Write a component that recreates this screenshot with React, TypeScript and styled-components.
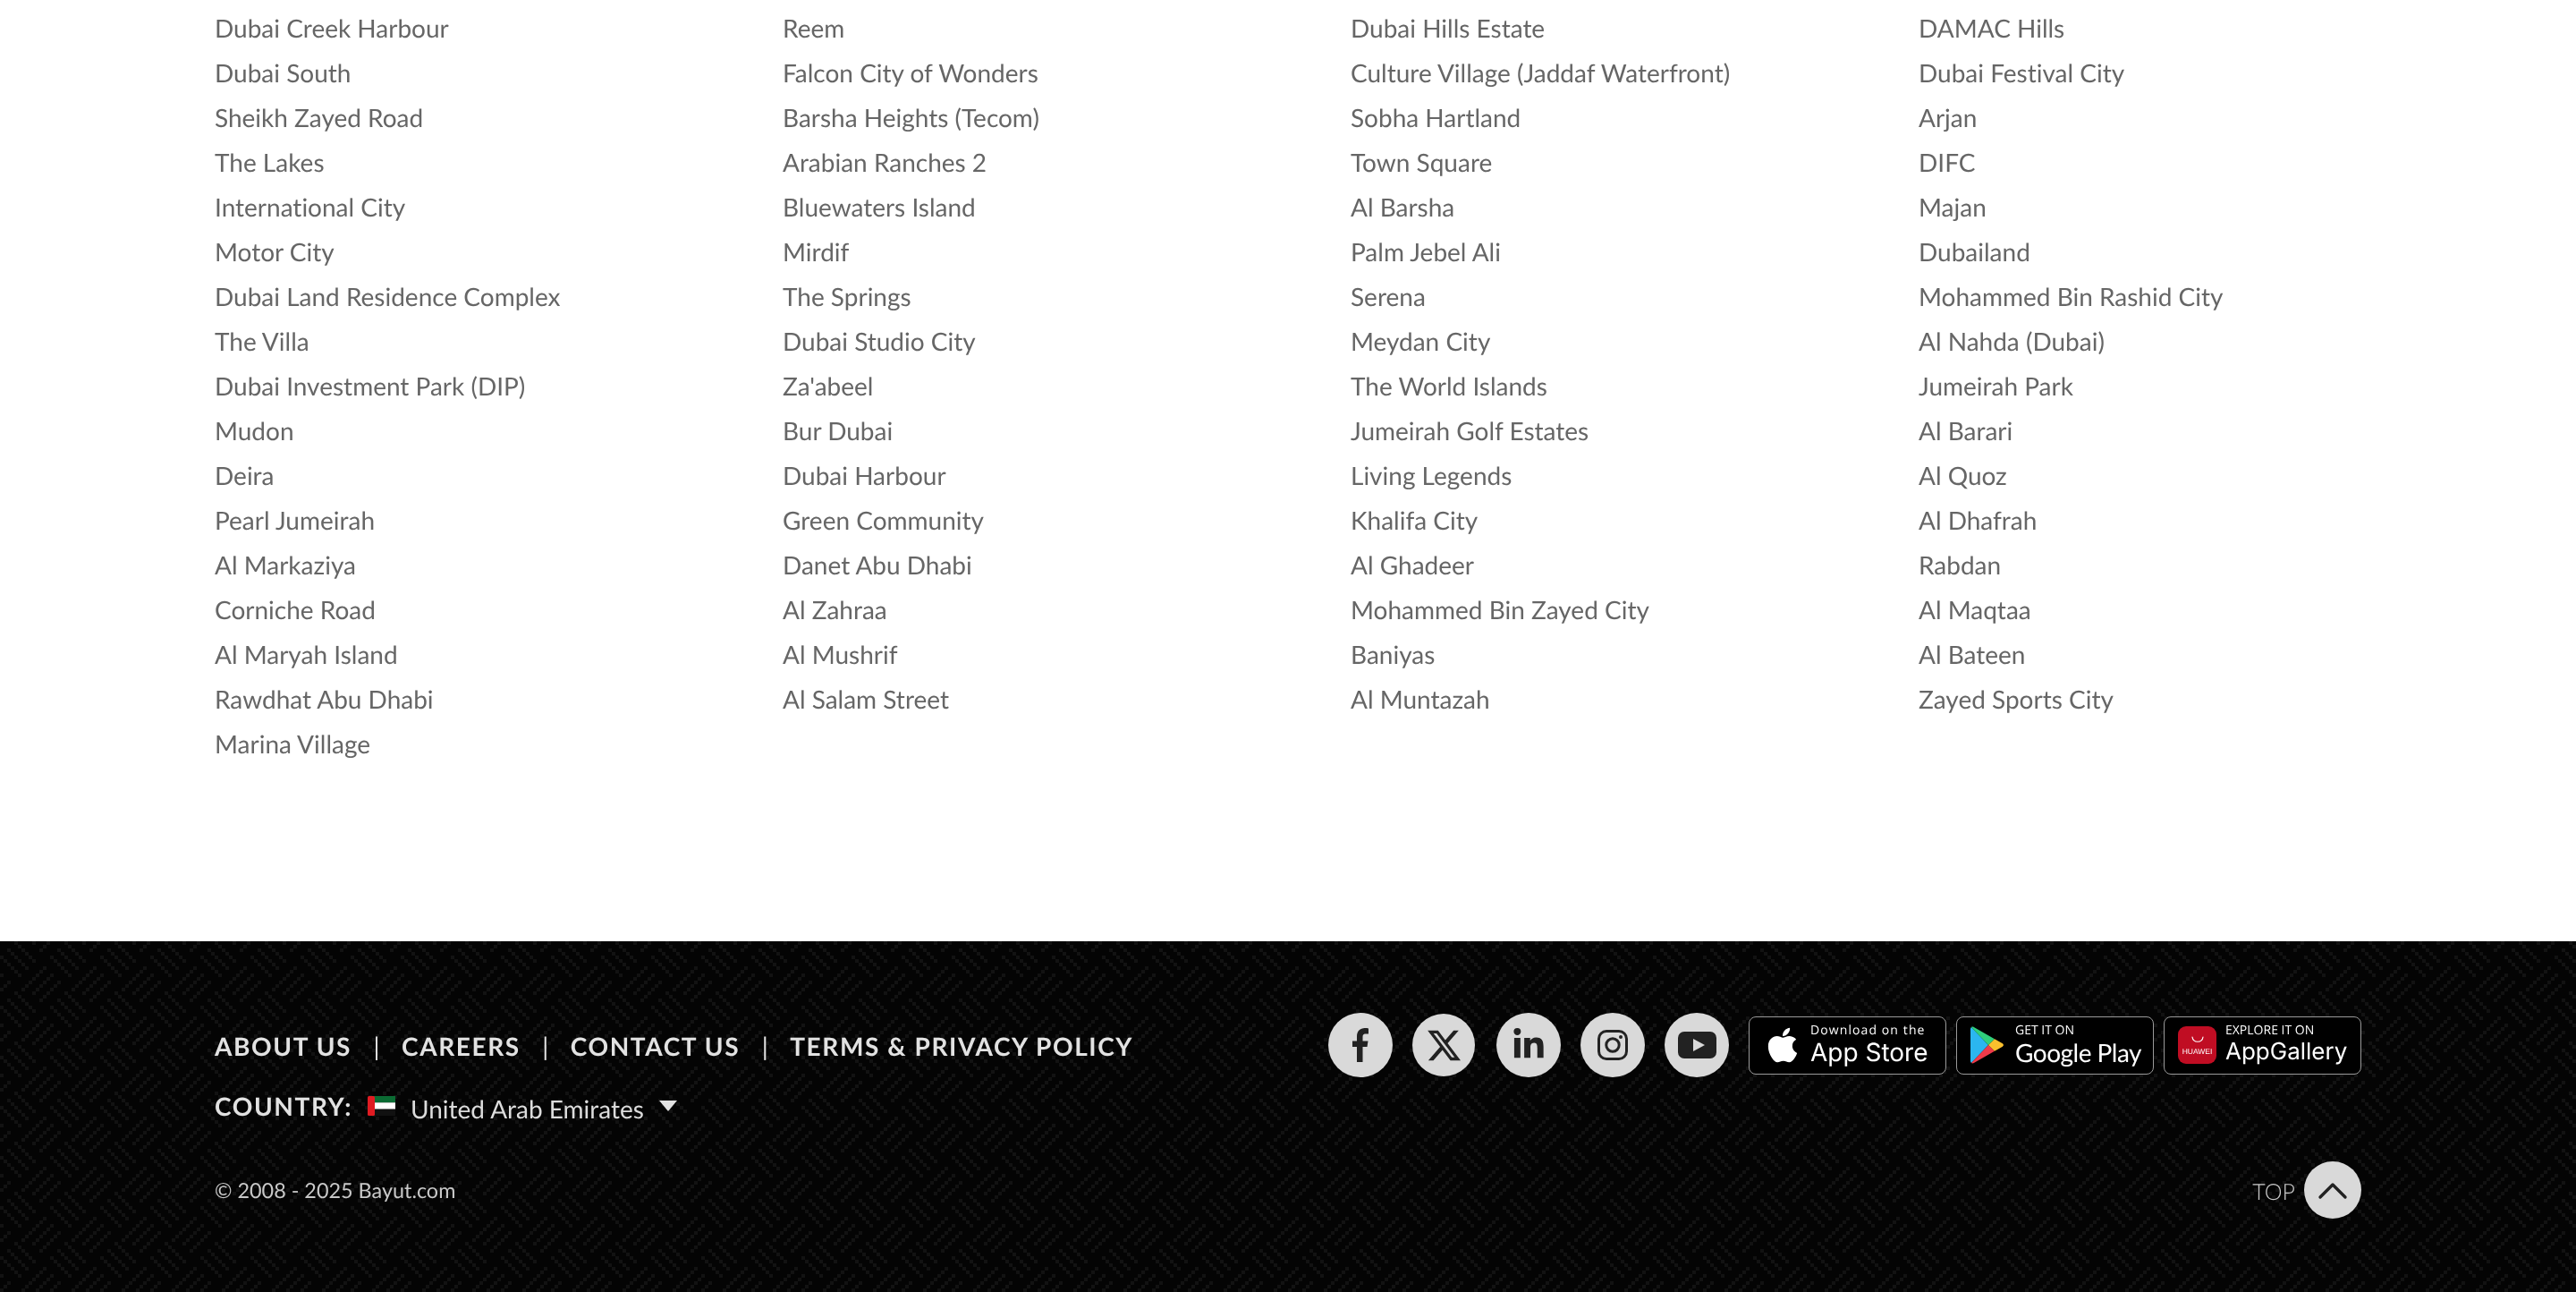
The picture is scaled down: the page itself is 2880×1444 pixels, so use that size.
import React from "react";
import styled, { createGlobalStyle } from "styled-components";
import { FaApple, FaLinkedinIn, FaXTwitter } from "react-icons/fa6";

const columns: string[][] = [
  ["Dubai Creek Harbour", "Dubai South", "Sheikh Zayed Road", "The Lakes", "International City", "Motor City", "Dubai Land Residence Complex", "The Villa", "Dubai Investment Park (DIP)", "Mudon", "Deira", "Pearl Jumeirah", "Al Markaziya", "Corniche Road", "Al Maryah Island", "Rawdhat Abu Dhabi", "Marina Village"],
  ["Reem", "Falcon City of Wonders", "Barsha Heights (Tecom)", "Arabian Ranches 2", "Bluewaters Island", "Mirdif", "The Springs", "Dubai Studio City", "Za'abeel", "Bur Dubai", "Dubai Harbour", "Green Community", "Danet Abu Dhabi", "Al Zahraa", "Al Mushrif", "Al Salam Street"],
  ["Dubai Hills Estate", "Culture Village (Jaddaf Waterfront)", "Sobha Hartland", "Town Square", "Al Barsha", "Palm Jebel Ali", "Serena", "Meydan City", "The World Islands", "Jumeirah Golf Estates", "Living Legends", "Khalifa City", "Al Ghadeer", "Mohammed Bin Zayed City", "Baniyas", "Al Muntazah"],
  ["DAMAC Hills", "Dubai Festival City", "Arjan", "DIFC", "Majan", "Dubailand", "Mohammed Bin Rashid City", "Al Nahda (Dubai)", "Jumeirah Park", "Al Barari", "Al Quoz", "Al Dhafrah", "Rabdan", "Al Maqtaa", "Al Bateen", "Zayed Sports City"],
];

const links = ["ABOUT US", "CAREERS", "CONTACT US", "TERMS & PRIVACY POLICY"];

// 14x14 cells of 4px, [col, row]
const weaveCells = [
  [4, 0], [5, 1], [6, 2], [7, 3], [8, 4], [9, 5],
  [2, 2], [3, 3], [4, 4], [5, 5], [6, 6], [7, 7],
  [0, 4], [1, 5], [2, 6], [3, 7], [4, 8], [5, 9],
  [12, 7], [11, 8], [10, 9], [9, 10], [8, 11], [7, 12], [6, 13],
  [0, 9], [13, 10], [12, 11], [11, 12], [10, 13], [9, 0],
  [2, 11], [1, 12], [0, 13], [13, 0], [12, 1], [11, 2],
];

const weaveSvg = `<svg xmlns="http://www.w3.org/2000/svg" width="56" height="56"><rect width="56" height="56" fill="#040404"/>${weaveCells
  .map(([c, r]) => `<rect x="${c * 4}" y="${r * 4}" width="4" height="4" fill="#121212"/>`)
  .join("")}</svg>`;

const GlobalStyle = createGlobalStyle`
  html, body {
    margin: 0;
    padding: 0;
    background: #fff;
    font-family: Lato, "Open Sans", sans-serif;
    text-rendering: geometricPrecision;
    font-variant-ligatures: none;
  }
  body {
    height: 1444px;
    overflow: hidden;
  }
`;

const Page = styled.div`
  will-change: transform;
`;

const Locations = styled.section`
  display: grid;
  grid-template-columns: repeat(4, 635px);
  align-items: start;
  padding: 6px 0 196px 240px;
`;

const LocationColumn = styled.div`
  display: flex;
  flex-direction: column;
`;

const LocationLink = styled.a`
  font-size: 28px;
  line-height: 50px;
  height: 50px;
  color: #666;
  white-space: nowrap;
`;

const Footer = styled.footer`
  height: 392px;
  box-sizing: border-box;
  padding: 80px 240px 0;
  background: #040404 url("data:image/svg+xml,${encodeURIComponent(weaveSvg)}") 0 0 repeat;
`;

const TopRow = styled.div`
  display: flex;
  justify-content: space-between;
  align-items: flex-start;
`;

const LeftBlock = styled.div`
  display: flex;
  flex-direction: column;
  gap: 12px;
`;

const NavRow = styled.nav`
  display: flex;
  align-items: center;
  height: 74px;
`;

const NavLink = styled.a`
  font-size: 28px;
  font-weight: 700;
  letter-spacing: 1.6px;
  color: #e2e2e2;
  white-space: nowrap;
`;

const NavSep = styled.span`
  font-size: 28px;
  color: #e2e2e2;
  margin: 0 24.5px;
`;

const CountryRow = styled.div`
  display: flex;
  align-items: center;
  height: 36px;
`;

const CountryLabel = styled.span`
  font-size: 28px;
  font-weight: 700;
  letter-spacing: 1.6px;
  color: #e2e2e2;
  margin-right: 17px;
`;

const CountryName = styled.span`
  font-size: 28px;
  color: #dcdcdc;
  margin: 5px 17px 0 17px;
`;

const Caret = styled.span`
  width: 0;
  height: 0;
  border-left: 10px solid transparent;
  border-right: 10px solid transparent;
  border-top: 12px solid #e2e2e2;
`;

const RightBlock = styled.div`
  display: flex;
  align-items: center;
`;

const SocialRow = styled.div`
  display: flex;
  align-items: center;
  gap: 22px;
  margin-right: 22px;
`;

const SocialCircle = styled.a<{ $narrow?: boolean }>`
  display: flex;
  align-items: center;
  justify-content: center;
  width: ${(p) => (p.$narrow ? 70 : 72)}px;
  height: ${(p) => (p.$narrow ? 70 : 72)}px;
  margin-right: ${(p) => (p.$narrow ? 2 : 0)}px;
  border-radius: 50%;
  background: #d9d9d9;
  color: #222;
`;

const BadgeRow = styled.div`
  display: flex;
  gap: 11px;
`;

const Badge = styled.a<{ $pad: number; $gap: number }>`
  display: flex;
  align-items: center;
  gap: ${(p) => p.$gap}px;
  box-sizing: border-box;
  width: 221px;
  height: 65px;
  padding-left: ${(p) => p.$pad}px;
  border: 1.5px solid #9a9a9a;
  border-radius: 8px;
  background: #000;
  color: #fff;
`;

const BadgeText = styled.div`
  display: flex;
  flex-direction: column;
`;

const BadgeSmall = styled.span<{ $spacing?: number }>`
  font-family: "Open Sans", sans-serif;
  font-size: 14px;
  line-height: 16px;
  letter-spacing: ${(p) => p.$spacing ?? 0}px;
  white-space: nowrap;
`;

const BadgeBig = styled.span<{ $font: string; $size: number; $spacing?: number }>`
  font-family: ${(p) => p.$font}, sans-serif;
  font-size: ${(p) => p.$size}px;
  line-height: 32px;
  letter-spacing: ${(p) => p.$spacing ?? 0}px;
  white-space: nowrap;
`;

const HuaweiTile = styled.div`
  display: flex;
  flex-direction: column;
  align-items: center;
  justify-content: center;
  gap: 5px;
  width: 43px;
  height: 42px;
  border-radius: 9px;
  background: #c00d23;
`;

const HuaweiName = styled.span`
  font-family: "Liberation Sans", sans-serif;
  font-size: 8.5px;
  line-height: 8px;
  color: #fff;
`;

const BottomRow = styled.div`
  display: flex;
  justify-content: space-between;
  align-items: center;
  height: 64px;
  margin-top: 44px;
`;

const Copyright = styled.span`
  font-size: 23.4px;
  color: #c8c8c8;
`;

const TopLink = styled.a`
  display: flex;
  align-items: center;
  gap: 10px;
`;

const TopLabel = styled.span`
  font-size: 25px;
  font-weight: 300;
  color: #c8c8c8;
  margin-top: 4px;
`;

const TopCircle = styled.span`
  display: flex;
  align-items: center;
  justify-content: center;
  width: 64px;
  height: 64px;
  border-radius: 50%;
  background: #d9d9d9;
`;

const FacebookIcon = () => (
  <svg width="18" height="38" viewBox="0 0 18 38" fill="#222">
    <path d="M5 38 V21 H0 V14.5 H5 V9.5 C5 3.5 8.5 0 14 0 C15.5 0 17 .2 18 .4 V6.5 H15 C12.5 6.5 11.5 7.7 11.5 10 V14.5 H17.5 L16.5 21 H11.5 V38 Z" />
  </svg>
);

const InstagramIcon = () => (
  <svg width="34" height="34" viewBox="0 0 34 34" fill="none" stroke="#222" strokeWidth="3">
    <rect x="1.5" y="1.5" width="31" height="31" rx="8.5" />
    <circle cx="17" cy="17" r="7.2" />
    <circle cx="26" cy="8" r="2" fill="#222" stroke="none" />
  </svg>
);

const YoutubeIcon = () => (
  <svg width="43" height="30" viewBox="0 0 43 30">
    <rect width="43" height="30" rx="7" fill="#222" />
    <path d="M17 8 L30 15 L17 22 Z" fill="#d9d9d9" />
  </svg>
);

const FlagIcon = () => (
  <svg width="31" height="22" viewBox="0 0 31 22">
    <rect x="7" width="24" height="7.3" fill="#0b6b33" />
    <rect x="7" y="7.3" width="24" height="7.4" fill="#fff" />
    <rect x="7" y="14.7" width="24" height="7.3" fill="#111" />
    <rect width="8" height="22" rx="1.5" fill="#e01b22" />
  </svg>
);

const PlayIcon = () => (
  <svg width="37" height="42" viewBox="0 0 37 42">
    <path d="M1 1 L20 21 L1 41 C0.4 40.5 0 39.8 0 39 V3 C0 2.2 0.4 1.5 1 1 Z" fill="#2bb6ef" />
    <path d="M1 1 C1.8 0.4 2.8 0.4 3.8 1 L27 14.2 L20 21 Z" fill="#2fcf7c" />
    <path d="M1 41 C1.8 41.6 2.8 41.6 3.8 41 L27 27.8 L20 21 Z" fill="#ee3a4a" />
    <path d="M27 14.2 L35 18.8 C37.6 20.2 37.6 21.8 35 23.2 L27 27.8 L20 21 Z" fill="#fbc02d" />
  </svg>
);

const ChevronIcon = () => (
  <svg width="34" height="21" viewBox="0 0 34 21" fill="none" stroke="#222" strokeWidth="3.4" strokeLinecap="round" strokeLinejoin="round">
    <path d="M3 18 L17 4 L31 18" />
  </svg>
);

const App: React.FC = () => {
  return (
    <Page>
      <GlobalStyle />
      <Locations>
        {columns.map((col, i) => (
          <LocationColumn key={i}>
            {col.map((name) => (
              <LocationLink key={name}>{name}</LocationLink>
            ))}
          </LocationColumn>
        ))}
      </Locations>
      <Footer>
        <TopRow>
          <LeftBlock>
            <NavRow>
              {links.map((link, i) => (
                <React.Fragment key={link}>
                  {i > 0 && <NavSep>|</NavSep>}
                  <NavLink>{link}</NavLink>
                </React.Fragment>
              ))}
            </NavRow>
            <CountryRow>
              <CountryLabel>COUNTRY:</CountryLabel>
              <FlagIcon />
              <CountryName>United Arab Emirates</CountryName>
              <Caret />
            </CountryRow>
          </LeftBlock>
          <RightBlock>
            <SocialRow>
              <SocialCircle><FacebookIcon /></SocialCircle>
              <SocialCircle $narrow><FaXTwitter size={41} /></SocialCircle>
              <SocialCircle><FaLinkedinIn size={38} /></SocialCircle>
              <SocialCircle><InstagramIcon /></SocialCircle>
              <SocialCircle><YoutubeIcon /></SocialCircle>
            </SocialRow>
            <BadgeRow>
              <Badge $pad={15} $gap={9}>
                <FaApple size={44} color="#fff" />
                <BadgeText>
                  <BadgeSmall $spacing={1.1}>Download on the</BadgeSmall>
                  <BadgeBig $font="Inter" $size={28}>App Store</BadgeBig>
                </BadgeText>
              </Badge>
              <Badge $pad={15} $gap={13}>
                <PlayIcon />
                <BadgeText>
                  <BadgeSmall>GET IT ON</BadgeSmall>
                  <BadgeBig $font="Lato" $size={28} $spacing={-0.5}>Google Play</BadgeBig>
                </BadgeText>
              </Badge>
              <Badge $pad={15} $gap={10}>
                <HuaweiTile>
                  <svg width="14" height="8" viewBox="0 0 14 8" fill="none" stroke="#fff" strokeWidth="1.2" strokeLinecap="round">
                    <path d="M1 1 C2 8 12 8 13 1" />
                  </svg>
                  <HuaweiName>HUAWEI</HuaweiName>
                </HuaweiTile>
                <BadgeText>
                  <BadgeSmall>EXPLORE IT ON</BadgeSmall>
                  <BadgeBig $font="Inter" $size={26}>AppGallery</BadgeBig>
                </BadgeText>
              </Badge>
            </BadgeRow>
          </RightBlock>
        </TopRow>
        <BottomRow>
          <Copyright>© 2008 - 2025 Bayut.com</Copyright>
          <TopLink>
            <TopLabel>TOP</TopLabel>
            <TopCircle><ChevronIcon /></TopCircle>
          </TopLink>
        </BottomRow>
      </Footer>
    </Page>
  );
};

export default App;
